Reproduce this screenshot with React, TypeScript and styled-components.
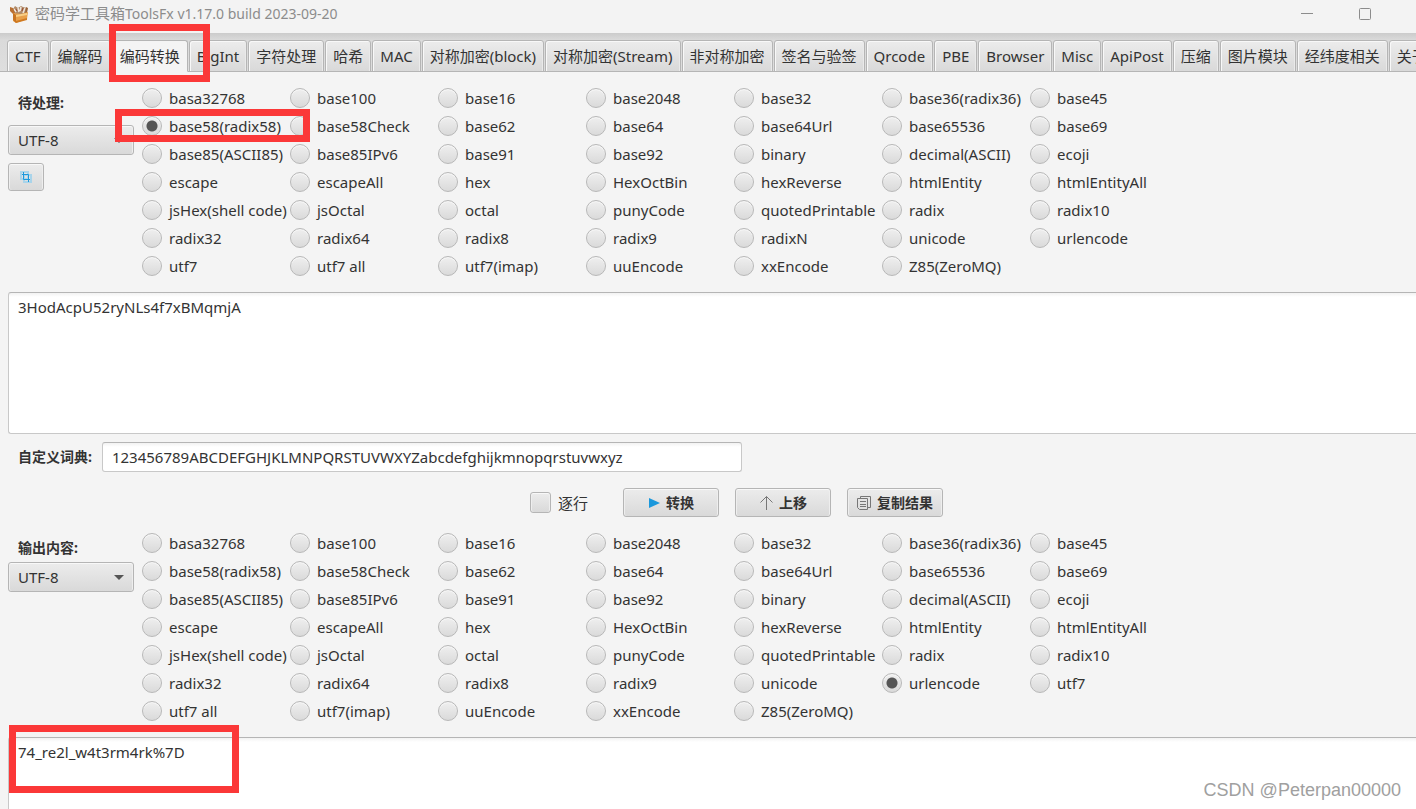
import React, { useState } from 'react';
import styled, { createGlobalStyle } from 'styled-components';

const GlobalStyle = createGlobalStyle`
  *, *::before, *::after { box-sizing: border-box; }
  body { margin: 0; background: #f4f4f4; }
  body, button, input, select, textarea {
    font-family: 'Noto Sans', 'Noto Sans CJK SC', sans-serif;
    font-size: 15px;
    line-height: 20px;
    color: #333;
  }
`;

const Window = styled.div`
  position: relative;
  display: flex;
  flex-direction: column;
  height: 100vh;
  overflow: hidden;
  background: #f4f4f4;
`;

const TitleBar = styled.header`
  display: flex;
  align-items: center;
  flex: none;
  height: 33px;
  padding: 0 22px 5px 8px;
  background: #f3f3f3;
`;

const Title = styled.h1`
  flex: 1;
  margin: 0 0 0 5px;
  padding-bottom: 2px;
  font-size: 15px;
  font-weight: 400;
  color: #8c8c8c;
`;

const Version = styled.span`
  font-size: 14px;
`;

const WindowButton = styled.button`
  display: flex;
  align-items: center;
  justify-content: center;
  width: 58px;
  height: 28px;
  padding: 0;
  border: 0;
  background: transparent;
`;

const TabBar = styled.nav`
  display: flex;
  align-items: flex-end;
  gap: 1px;
  flex: none;
  height: 39px;
  padding-left: 7px;
  overflow: hidden;
  background: linear-gradient(#cbcbcb, #dadada 7px, #dedede);
  box-shadow: inset 0 -1px #b5b5b5;
`;

const Tab = styled.button<{ $active: boolean }>`
  flex: none;
  height: 32px;
  padding: 0 7px;
  border: 1px solid #b5b5b5;
  border-bottom-color: ${p => (p.$active ? '#f4f4f4' : '#b5b5b5')};
  border-radius: 3px 3px 0 0;
  background: ${p => (p.$active ? '#f4f4f4' : 'linear-gradient(#ececec, #d9d9d9)')};
  box-shadow: ${p => (p.$active ? 'none' : 'inset 1px 1px #f8f8f8, inset -1px 0 #eaeaea')};
  white-space: nowrap;
`;

const Section = styled.section`
  display: flex;
  flex: none;
  gap: 8px;
  padding: 12px 0 12px 8px;
`;

const Side = styled.div<{ $gap: number }>`
  display: flex;
  flex-direction: column;
  align-items: flex-start;
  gap: ${p => p.$gap}px;
  width: 126px;
  padding-top: 5px;
`;

const FieldLabel = styled.label`
  padding-left: 10px;
  font-size: 14px;
  line-height: 28px;
  font-weight: 700;
`;

const SelectBox = styled.div`
  position: relative;
  width: 100%;
`;

const SelectArrow = styled.svg`
  position: absolute;
  top: 13px;
  right: 10px;
  pointer-events: none;
`;

const raised = `
  border: 1px solid #b5b5b5;
  border-radius: 3px;
  background: linear-gradient(#ececec, #d9d9d9);
  box-shadow: inset 0 1px #f8f8f8, inset 1px 0 #eee, inset -1px 0 #eee;
`;

const Select = styled.select`
  ${raised}
  display: block;
  appearance: none;
  width: 100%;
  height: 30px;
  padding: 0 9px;
`;

const IconButton = styled.button`
  ${raised}
  display: flex;
  align-items: center;
  justify-content: center;
  width: 36px;
  height: 28px;
  padding: 0;
`;

const RadioGrid = styled.div`
  display: grid;
  grid-template-columns: repeat(7, 148px);
  grid-auto-rows: 28px;
`;

const RadioLabel = styled.label`
  display: flex;
  align-items: center;
  gap: 7px;
  white-space: nowrap;
`;

const Radio = styled.input`
  appearance: none;
  flex: none;
  width: 20px;
  height: 20px;
  margin: 0;
  border: 1px solid #b8b8b8;
  border-radius: 50%;
  background: linear-gradient(#efefef, #dadada);
  box-shadow: inset 0 1px #f7f7f7;
  &:checked {
    background: radial-gradient(circle, #555 5px, transparent 6px), linear-gradient(#efefef, #dadada);
  }
`;

const TextArea = styled.textarea<{ $fill?: boolean }>`
  display: block;
  flex: ${p => (p.$fill ? '1 0 72px' : '0 0 142px')};
  margin: 0 0 0 8px;
  padding: 4px 9px;
  border: 1px solid #c8c8c8;
  border-top-color: #b5b5b5;
  border-width: ${p => (p.$fill ? '1px 0 0 1px' : '1px 0 1px 1px')};
  border-radius: ${p => (p.$fill ? '3px 0 0 0' : '3px 0 0 3px')};
  outline: 0;
  resize: none;
  background: linear-gradient(#f2f2f2, #fff 4px);
`;

const DictRow = styled.div`
  display: flex;
  align-items: center;
  flex: none;
  gap: 10px;
  padding: 8px 8px 0;
`;

const TextInput = styled.input`
  width: 640px;
  height: 30px;
  padding: 0 9px;
  border: 1px solid #c8c8c8;
  border-top-color: #b5b5b5;
  border-radius: 3px;
  outline: 0;
  background: linear-gradient(#f2f2f2, #fff 4px);
`;

const Actions = styled.div`
  display: flex;
  align-items: center;
  justify-content: center;
  flex: none;
  gap: 16px;
  padding: 16px 0 0 57px;
`;

const CheckLabel = styled.label`
  display: flex;
  align-items: center;
  gap: 7px;
  margin-right: 19px;
`;

const Checkbox = styled.input`
  ${raised}
  appearance: none;
  width: 21px;
  height: 21px;
  margin: 0;
  &:checked { background: #777; }
`;

const ActionButton = styled.button`
  ${raised}
  display: flex;
  align-items: center;
  justify-content: center;
  gap: 6px;
  width: 96px;
  height: 29px;
  padding: 0;
  font-size: 14px;
  font-weight: 700;
`;

const Highlight = styled.div<{ $x: number; $y: number; $w: number; $h: number }>`
  position: absolute;
  left: ${p => p.$x}px;
  top: ${p => p.$y}px;
  width: ${p => p.$w}px;
  height: ${p => p.$h}px;
  border: 7px solid #fb3838;
  pointer-events: none;
`;

const Watermark = styled.div`
  position: absolute;
  right: 15px;
  bottom: 8px;
  font-family: 'Liberation Sans', sans-serif;
  font-size: 18px;
  line-height: 22px;
  color: #a0a0a0;
  pointer-events: none;
`;

const tabs = [
  'CTF', '编解码', '编码转换', 'BigInt', '字符处理', '哈希', 'MAC', '对称加密(block)', '对称加密(Stream)',
  '非对称加密', '签名与验签', 'Qrcode', 'PBE', 'Browser', 'Misc', 'ApiPost', '压缩', '图片模块', '经纬度相关', '关于',
];

const commonCodecs = [
  'basa32768', 'base100', 'base16', 'base2048', 'base32', 'base36(radix36)', 'base45',
  'base58(radix58)', 'base58Check', 'base62', 'base64', 'base64Url', 'base65536', 'base69',
  'base85(ASCII85)', 'base85IPv6', 'base91', 'base92', 'binary', 'decimal(ASCII)', 'ecoji',
  'escape', 'escapeAll', 'hex', 'HexOctBin', 'hexReverse', 'htmlEntity', 'htmlEntityAll',
  'jsHex(shell code)', 'jsOctal', 'octal', 'punyCode', 'quotedPrintable', 'radix', 'radix10',
  'radix32', 'radix64', 'radix8', 'radix9',
];
const tailCodecs = ['unicode', 'urlencode', 'utf7', 'utf7 all', 'utf7(imap)', 'uuEncode', 'xxEncode', 'Z85(ZeroMQ)'];
const inputCodecs = [...commonCodecs, 'radixN', ...tailCodecs];
const outputCodecs = [...commonCodecs, ...tailCodecs];

function CodecGrid({ name, codecs, initial }: { name: string; codecs: string[]; initial: string }) {
  const [selected, setSelected] = useState(initial);
  return (
    <RadioGrid role="radiogroup">
      {codecs.map(c => (
        <RadioLabel key={c}>
          <Radio type="radio" name={name} value={c} checked={selected === c} onChange={() => setSelected(c)} />
          {c}
        </RadioLabel>
      ))}
    </RadioGrid>
  );
}

function CharsetSelect({ id }: { id: string }) {
  return (
    <SelectBox>
      <Select id={id} defaultValue="UTF-8">
        <option>UTF-8</option>
        <option>GBK</option>
      </Select>
      <SelectArrow width="10" height="5" viewBox="0 0 10 5"><path d="M0 0h10L5 5z" fill="#555" /></SelectArrow>
    </SelectBox>
  );
}

const AppIcon = () => (
  <svg width="22" height="20" viewBox="0 0 22 20">
    <path d="M5 5l2-3 3 2 3-2 2 1 4 1-1 8-12-1z" fill="#b08a68" />
    <path d="M6 5l2 3M10 4l1 4M13 3l-1 4M17 4l-2 5" stroke="#eee6dc" strokeWidth="1.500" />
    <path d="M8 5l1 2M15 4l-1 3" stroke="#9c4a30" />
    <path d="M2 3l3 1 2 5-2 1-3-3z" fill="#b97032" />
    <path d="M18 3l2 1-1 5-2 1z" fill="#9a6236" />
    <path d="M5 9l8 1 7-2-1 7-11 4-3-2z" fill="#e8a04a" />
    <path d="M5 9l3 2v8l-3-3z" fill="#c87422" />
    <path d="M8 11l11-2v2L8 13z" fill="#f8cf86" />
    <path d="M8 17l11-3v2L8 19z" fill="#d07a20" />
  </svg>
);

export default function App() {
  const [active, setActive] = useState('编码转换');
  return (
    <Window>
      <GlobalStyle />
      <TitleBar>
        <AppIcon />
        <Title>密码学工具箱<Version>ToolsFx v1.17.0 build 2023-09-20</Version></Title>
        <WindowButton aria-label="最小化">
          <svg width="12" height="12" viewBox="0 0 12 12"><path d="M0 5.5h12" stroke="#8c8c8c" /></svg>
        </WindowButton>
        <WindowButton aria-label="最大化">
          <svg width="12" height="12" viewBox="0 0 12 12"><rect x=".5" y=".5" width="11" height="11" rx="1" fill="none" stroke="#8c8c8c" /></svg>
        </WindowButton>
      </TitleBar>
      <TabBar>
        {tabs.map(t => (
          <Tab key={t} $active={t === active} onClick={() => setActive(t)}>{t}</Tab>
        ))}
      </TabBar>

      <Section>
        <Side $gap={8}>
          <FieldLabel htmlFor="charset-in">待处理:</FieldLabel>
          <CharsetSelect id="charset-in" />
          <IconButton aria-label="粘贴">
            <svg width="12" height="12" viewBox="0 0 12 12" fill="none">
              <path d="M1 1h7v7H1z" stroke="#a9d4ea" strokeWidth="2" />
              <path d="M4 4h7v7H4z" stroke="#a9d4ea" strokeWidth="2" />
              <path d="M3.500 1v7.500H10M2 3.500h6.500V11" stroke="#1b98dc" />
            </svg>
          </IconButton>
        </Side>
        <CodecGrid name="codec-in" codecs={inputCodecs} initial="base58(radix58)" />
      </Section>
      <TextArea aria-label="待处理" spellCheck={false} defaultValue="3HodAcpU52ryNLs4f7xBMqmjA" />

      <DictRow>
        <FieldLabel htmlFor="dict">自定义词典:</FieldLabel>
        <TextInput id="dict" spellCheck={false} defaultValue="123456789ABCDEFGHJKLMNPQRSTUVWXYZabcdefghijkmnopqrstuvwxyz" />
      </DictRow>
      <Actions>
        <CheckLabel><Checkbox type="checkbox" />逐行</CheckLabel>
        <ActionButton>
          <svg width="12" height="12" viewBox="0 0 12 12"><path d="M1 1l11 5-11 5z" fill="#1b98dc" /></svg>
          转换
        </ActionButton>
        <ActionButton>
          <svg width="14" height="16" viewBox="0 0 14 16" fill="none" stroke="#777"><path d="M7.500 15V1.500M1.500 7.500l6-6 6 6" /></svg>
          上移
        </ActionButton>
        <ActionButton>
          <svg width="14" height="14" viewBox="0 0 14 14" fill="none" stroke="#777">
            <path d="M3.500 2.500V.5h10v11h-3M.5 2.500h10v11h-8l-2-2zM3 5.500h6M3 8.500h6M3 10.500h6" />
          </svg>
          复制结果
        </ActionButton>
      </Actions>

      <Section>
        <Side $gap={0}>
          <FieldLabel htmlFor="charset-out">输出内容:</FieldLabel>
          <CharsetSelect id="charset-out" />
        </Side>
        <CodecGrid name="codec-out" codecs={outputCodecs} initial="urlencode" />
      </Section>
      <TextArea $fill aria-label="输出内容" spellCheck={false} defaultValue="74_re2l_w4t3rm4rk%7D" />

      <Highlight $x={109} $y={24} $w={101} $h={58} />
      <Highlight $x={115} $y={109} $w={195} $h={33} />
      <Highlight $x={9} $y={725} $w={230} $h={68} />
      <Watermark>CSDN @Peterpan00000</Watermark>
    </Window>
  );
}
